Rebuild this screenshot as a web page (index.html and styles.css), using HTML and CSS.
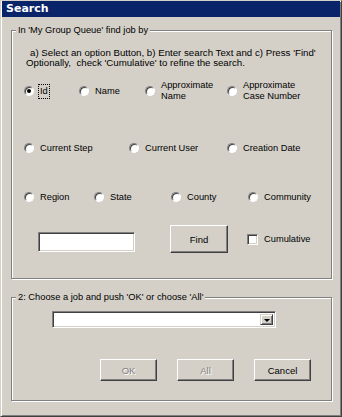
FILE: index.html
```html
<!DOCTYPE html>
<html>
<head>
<meta charset="utf-8">
<link rel="stylesheet" href="styles.css">
</head>
<body>
<div class="window">
  <div class="titlebar">Search</div>
  <fieldset class="group group-find">
    <legend>In 'My Group Queue' find job by</legend>
    <p class="instr instr-a">a) Select an option Button, b) Enter search Text and c) Press 'Find'</p>
    <p class="instr instr-b">Optionally,&nbsp; check 'Cumulative' to refine the search.</p>

    <div class="row row-1">
      <label class="opt"><span class="radio checked"></span><span class="lbl focus">Id</span></label>
      <label class="opt"><span class="radio"></span><span class="lbl">Name</span></label>
      <label class="opt"><span class="radio"></span><span class="lbl">Approximate<br>Name</span></label>
      <label class="opt"><span class="radio"></span><span class="lbl">Approximate<br>Case Number</span></label>
    </div>

    <div class="row row-2">
      <label class="opt"><span class="radio"></span><span class="lbl">Current Step</span></label>
      <label class="opt"><span class="radio"></span><span class="lbl">Current User</span></label>
      <label class="opt"><span class="radio"></span><span class="lbl">Creation Date</span></label>
    </div>

    <div class="row row-3">
      <label class="opt"><span class="radio"></span><span class="lbl">Region</span></label>
      <label class="opt"><span class="radio"></span><span class="lbl">State</span></label>
      <label class="opt"><span class="radio"></span><span class="lbl">County</span></label>
      <label class="opt"><span class="radio"></span><span class="lbl">Community</span></label>
    </div>

    <div class="row row-4">
      <div class="textbox"></div>
      <div class="button btn-find">Find</div>
      <span class="checkbox"></span>
      <span class="check-lbl">Cumulative</span>
    </div>
  </fieldset>

  <fieldset class="group group-choose">
    <legend>2: Choose a job and push 'OK' or choose 'All'</legend>
    <div class="combo">
      <div class="combo-btn"><span class="arrow"></span></div>
    </div>
    <div class="buttons">
      <div class="button disabled">OK</div>
      <div class="button disabled">All</div>
      <div class="button">Cancel</div>
    </div>
  </fieldset>
</div>
</body>
</html>
```

FILE: styles.css
```css
html, body {
  margin: 0;
  padding: 0;
  background: #d4d0c8;
}

.window {
  box-sizing: border-box;
  width: 342px;
  height: 417px;
  background: #d4d0c8;
  border: 1px solid;
  border-color: #d4d0c8 #404040 #404040 #d4d0c8;
  box-shadow: inset 1px 1px 0 #ffffff, inset -1px -1px 0 #808080;
  padding: 0 1px;
  font-family: "Liberation Sans", Arial, sans-serif;
  font-size: 9.3px;
  color: #000;
}

.titlebar {
  height: 16px;
  line-height: 16px;
  background: #0a246a;
  color: #fff;
  font-family: "DejaVu Sans", Tahoma, sans-serif;
  font-weight: bold;
  font-size: 11px;
  padding-left: 4px;
}

.group {
  box-sizing: border-box;
  width: 321px;
  margin: 0 0 0 9px;
  padding: 0;
  border: 1px solid #808080;
  box-shadow: inset 1px 1px 0 #ffffff, 1px 1px 0 #ffffff;
  min-width: 0;
}

.group legend {
  margin-left: 4px;
  padding: 0 2px;
  line-height: 11px;
  height: 11px;
  background: #d4d0c8;
}

.group-find {
  margin-top: 8px;
  padding-bottom: 25px;
}

.group-choose {
  margin-top: 13px;
  padding-bottom: 19px;
}

.instr {
  margin: 0;
  line-height: 10px;
  font-size: 9.7px;
  white-space: nowrap;
}

.instr-a {
  margin: 12px 0 0 18px;
}

.instr-b {
  margin-left: 14px;
}

.row {
  display: grid;
  align-items: center;
  height: 22px;
  padding-left: 12px;
}

.row-1 {
  margin-top: 12px;
  grid-template-columns: 55px 66px 82px auto;
}

.row-2 {
  margin-top: 35px;
  grid-template-columns: 105px 98px auto;
}

.row-3 {
  margin-top: 27px;
  grid-template-columns: 70px 77px 77px auto;
}

.opt {
  display: flex;
  align-items: center;
}

.lbl {
  line-height: 11px;
  white-space: nowrap;
}

.lbl.focus {
  outline: 1px dotted #000;
  outline-offset: 0;
  padding: 1px 1px;
  margin-left: -1px;
}

.radio {
  box-sizing: border-box;
  flex: none;
  width: 10px;
  height: 10px;
  margin-right: 6px;
  border-radius: 50%;
  background: #fff;
  border: 1px solid;
  border-color: #808080 #ffffff #ffffff #808080;
  box-shadow: inset 1px 1px 0 #404040;
  display: flex;
  align-items: center;
  justify-content: center;
}

.radio.checked::after {
  content: "";
  width: 4px;
  height: 4px;
  border-radius: 50%;
  background: #000;
}

.row-4 {
  display: flex;
  align-items: center;
  height: 28px;
  margin-top: 17px;
  padding-left: 26px;
}

.textbox {
  box-sizing: border-box;
  width: 97px;
  height: 20px;
  background: #fff;
  border: 1px solid;
  border-color: #808080 #ffffff #ffffff #808080;
  box-shadow: inset 1px 1px 0 #404040, inset -1px -1px 0 #d4d0c8;
  margin-top: 6px;
}

.button {
  box-sizing: border-box;
  display: flex;
  align-items: center;
  justify-content: center;
  width: 57px;
  height: 22px;
  background: #d4d0c8;
  border: 1px solid;
  border-color: #ffffff #404040 #404040 #ffffff;
  box-shadow: inset -1px -1px 0 #808080;
  font-size: 9.5px;
}

.btn-find {
  width: 58px;
  height: 28px;
  margin-left: 35px;
}

.button.disabled {
  color: #808080;
  text-shadow: 1px 1px 0 #ffffff;
}

.checkbox {
  box-sizing: border-box;
  width: 11px;
  height: 11px;
  margin-left: 19px;
  background: #fff;
  border: 1px solid;
  border-color: #808080 #ffffff #ffffff #808080;
  box-shadow: inset 1px 1px 0 #404040, inset -1px -1px 0 #d4d0c8;
}

.check-lbl {
  margin-left: 6px;
}

.combo {
  box-sizing: border-box;
  display: flex;
  justify-content: flex-end;
  align-items: stretch;
  width: 224px;
  height: 17px;
  margin: 8px 0 0 40px;
  padding: 2px;
  background: #fff;
  border: 1px solid;
  border-color: #808080 #ffffff #ffffff #808080;
  box-shadow: inset 1px 1px 0 #404040, inset -1px -1px 0 #d4d0c8;
}

.combo-btn {
  box-sizing: border-box;
  width: 13px;
  display: flex;
  align-items: center;
  justify-content: center;
  background: #d4d0c8;
  border: 1px solid;
  border-color: #d4d0c8 #404040 #404040 #d4d0c8;
  box-shadow: inset 1px 1px 0 #ffffff, inset -1px -1px 0 #808080;
}

.arrow {
  width: 0;
  height: 0;
  border-left: 3px solid transparent;
  border-right: 3px solid transparent;
  border-top: 3px solid #000;
  margin-top: 1px;
}

.buttons {
  display: flex;
  gap: 20px;
  margin: 31px 0 0 88px;
}
```
